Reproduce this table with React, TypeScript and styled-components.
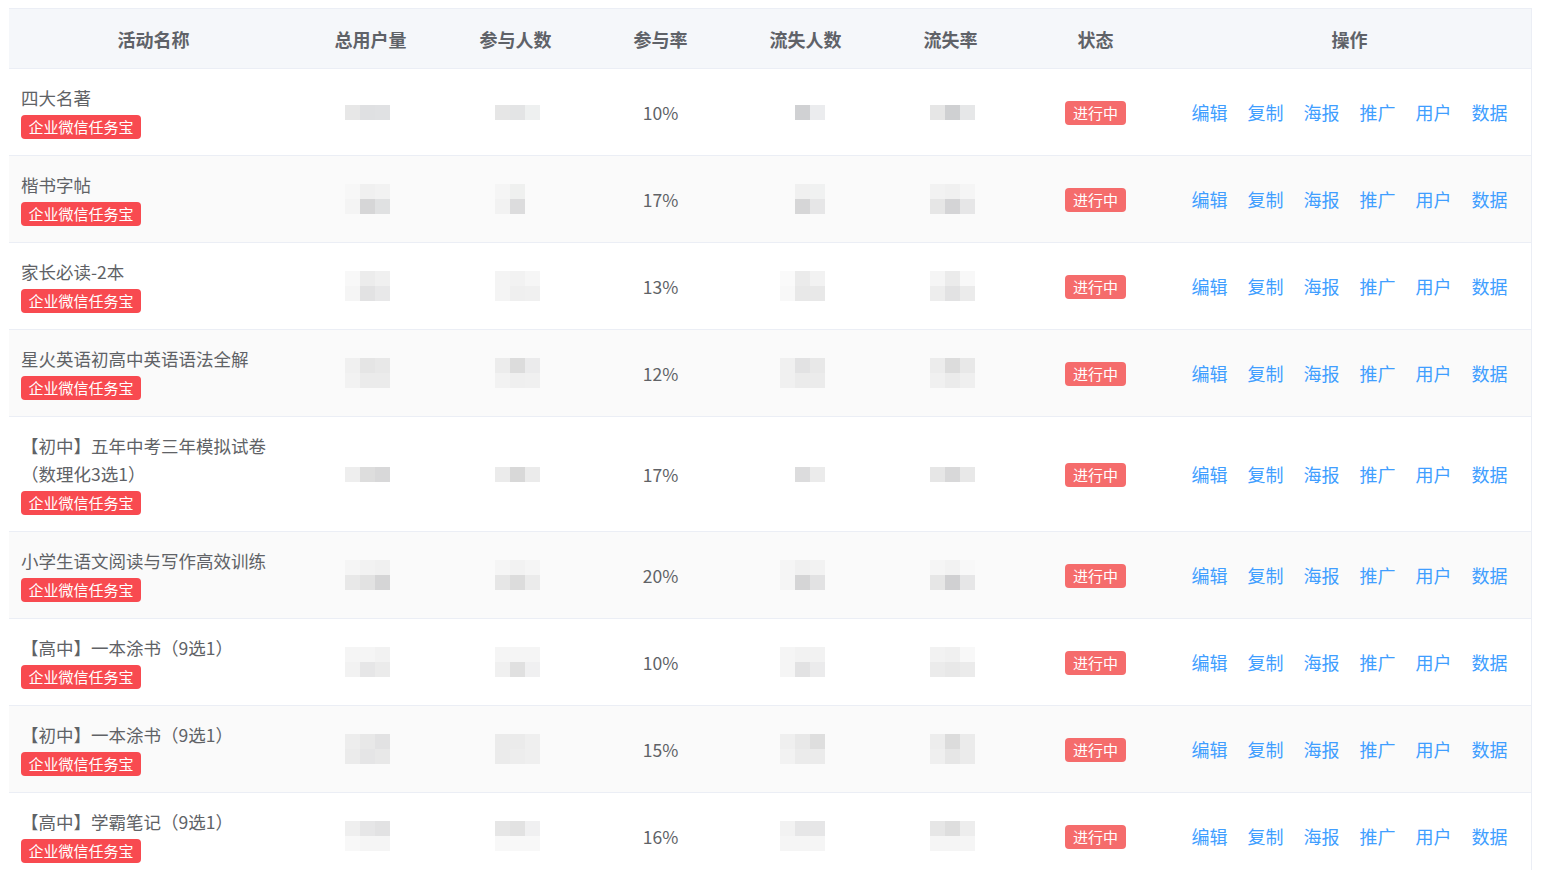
import React from "react";
import styled, { createGlobalStyle } from "styled-components";

const GlobalStyle = createGlobalStyle`
  html, body { margin: 0; padding: 0; background: #ffffff; overflow: hidden; }
  body { font-family: "Noto Sans CJK SC", "Noto Sans", sans-serif; }
`;

const COLS = "289px repeat(6, 145px) 363px";

const Page = styled.div`
  padding: 8px 0 0 9px;
`;

const Table = styled.div`
  width: 1523px;
  border-top: 1px solid #ebeef5;
  border-right: 1px solid #ebeef5;
  box-sizing: border-box;
`;

const HeaderRow = styled.div`
  display: grid;
  grid-template-columns: ${COLS};
  height: 60px;
  background: #f5f7fa;
  border-bottom: 1px solid #ebeef5;
  box-sizing: border-box;
`;

const HeadCell = styled.div`
  display: flex;
  align-items: center;
  justify-content: center;
  font-size: 18px;
  font-weight: 700;
  color: #5f6268;
`;

const Row = styled.div<{ $striped: boolean }>`
  display: grid;
  grid-template-columns: ${COLS};
  background: ${(p) => (p.$striped ? "#fafafa" : "#ffffff")};
  border-bottom: 1px solid #ebeef5;
`;

const NameCell = styled.div`
  padding: 15px 12px 16px 12px;
  display: flex;
  flex-direction: column;
  align-items: flex-start;
`;

const NameText = styled.div`
  font-size: 17.5px;
  line-height: 28px;
  color: #606266;
`;

const Tag = styled.span`
  margin-top: 3px;
  height: 24px;
  padding: 0 7.5px;
  border-radius: 4px;
  background: #f84a50;
  color: #ffffff;
  font-size: 15px;
  line-height: 24px;
  white-space: nowrap;
`;

const Cell = styled.div`
  display: flex;
  align-items: center;
  justify-content: center;
  font-size: 17.5px;
  color: #606266;
`;

const Status = styled.span`
  margin-top: 2px;
  height: 24px;
  padding: 0 7.5px;
  border-radius: 4px;
  background: #f56c6c;
  color: #ffffff;
  font-size: 15px;
  line-height: 24px;
`;

const Actions = styled.div`
  display: flex;
  align-items: center;
  justify-content: center;
  gap: 20px;
`;

const ActionLink = styled.a`
  font-size: 18px;
  color: #409eff;
  text-decoration: none;
  cursor: pointer;
`;

const MosaicGrid = styled.div<{ $dx: number }>`
  display: grid;
  grid-template-columns: repeat(3, 15px);
  grid-auto-rows: 15px;
  transform: translateX(${(p) => p.$dx}px);
`;

const Block = styled.span<{ $c: string | null }>`
  background: ${(p) => p.$c ?? "transparent"};
`;

type M = (string | null)[][];

const Mosaic: React.FC<{ m: M; dx: number }> = ({ m, dx }) => (
  <MosaicGrid $dx={dx}>
    {m.flat().map((c, i) => (
      <Block key={i} $c={c} />
    ))}
  </MosaicGrid>
);

interface RowData {
  name: string;
  rate: string;
  m: [M, M, M, M];
}

const rows: RowData[] = [
  {
    name: "四大名著",
    rate: "10%",
    m: [
      [["#e7e7e7", "#dfe0e2", "#e0e1e3"]],
      [["#e6e6e6", "#e3e4e5", "#eef0f0"]],
      [[null, "#d0d1d3", "#ebecee"]],
      [["#e6e6e6", "#cfd0d2", "#e6e7e8"]],
    ],
  },
  {
    name: "楷书字帖",
    rate: "17%",
    m: [
      [["#f7f7f7", "#f0f0f0", "#f2f2f2"], ["#f4f4f4", "#d6d6d7", "#e0e1e2"]],
      [["#f5f5f5", "#eff0ef", null], ["#f2f2f2", "#dcdcdd", null]],
      [[null, "#f0f0f0", "#f0f1f1"], [null, "#d6d6d7", "#e6e6e7"]],
      [["#f2f2f2", "#f0f0f0", "#f5f5f5"], ["#e6e6e6", "#d4d4d6", "#e6e6e7"]],
    ],
  },
  {
    name: "家长必读-2本",
    rate: "13%",
    m: [
      [["#f8f8f8", "#ececec", "#f0f0f0"], ["#f5f5f5", "#e2e2e3", "#e8e8e9"]],
      [["#f4f4f4", "#f2f2f2", "#f6f6f6"], ["#f4f4f4", "#efefef", "#f0f0f0"]],
      [["#fafafa", "#ebebeb", "#f2f2f2"], ["#f8f8f8", "#e8e8e8", "#e8e8e8"]],
      [["#f5f5f5", "#ebebeb", "#f8f8f8"], ["#ededed", "#e2e2e3", "#ebebeb"]],
    ],
  },
  {
    name: "星火英语初高中英语语法全解",
    rate: "12%",
    m: [
      [["#f0f0f0", "#e5e5e5", "#e8e8e8"], ["#f2f2f2", "#ebebeb", "#ebebeb"]],
      [["#ececec", "#dcdcdc", "#ebebec"], ["#f2f2f2", "#efefef", "#f0f0f0"]],
      [["#f0f0f0", "#e2e2e3", "#e8e8e8"], ["#f0f0f0", "#ebebeb", "#ebebeb"]],
      [["#ececec", "#dcdcdc", "#e8e8e8"], ["#f0f0f0", "#ebebeb", "#efefef"]],
    ],
  },
  {
    name: "【初中】五年中考三年模拟试卷（数理化3选1）",
    rate: "17%",
    m: [
      [["#eeeeee", "#dddddd", "#d8d8d9"]],
      [["#ebebeb", "#d8d8d8", "#ebebeb"]],
      [[null, "#dcdcdd", "#ebebeb"]],
      [["#e6e6e6", "#d8d8d9", "#e8e8e8"]],
    ],
  },
  {
    name: "小学生语文阅读与写作高效训练",
    rate: "20%",
    m: [
      [["#f5f5f5", "#f2f2f2", "#f0f0f0"], ["#e8e8e8", "#e2e2e2", "#d5d5d6"]],
      [["#f5f5f5", "#f2f2f2", "#f5f5f5"], ["#e6e6e6", "#dcdcdc", "#ebebeb"]],
      [["#f5f5f5", "#f0f0f0", "#f2f2f2"], ["#f5f5f5", "#d5d5d6", "#e2e2e3"]],
      [["#f5f5f5", "#f2f2f2", "#f8f8f8"], ["#e6e6e6", "#d0d0d2", "#e6e6e7"]],
    ],
  },
  {
    name: "【高中】一本涂书（9选1）",
    rate: "10%",
    m: [
      [["#f5f5f5", "#f5f5f5", "#f2f2f2"], ["#f2f2f2", "#e6e6e7", "#ebebeb"]],
      [["#f5f5f5", "#f5f5f5", "#f5f5f5"], ["#f0f0f0", "#e0e0e0", "#f0f0f1"]],
      [["#f5f5f5", "#f2f2f2", "#f2f2f2"], ["#f5f5f5", "#e2e2e3", "#ebebec"]],
      [["#f2f2f2", "#f0f0f0", "#f8f8f8"], ["#ebebeb", "#e8e8e8", "#ebebeb"]],
    ],
  },
  {
    name: "【初中】一本涂书（9选1）",
    rate: "15%",
    m: [
      [["#ededed", "#e8e8e8", "#e2e2e3"], ["#ebebeb", "#e5e5e6", "#e8e8e8"]],
      [["#ebebeb", "#ebebeb", "#efefef"], ["#ebebeb", "#ededed", "#efefef"]],
      [["#efefef", "#e8e8e8", "#dedede"], ["#f2f2f2", "#ebebeb", "#ebebeb"]],
      [["#ededed", "#dcdcdc", "#ebebeb"], ["#efefef", "#e6e6e6", "#ebebeb"]],
    ],
  },
  {
    name: "【高中】学霸笔记（9选1）",
    rate: "16%",
    m: [
      [["#efefef", "#e6e6e7", "#e2e2e3"], ["#f8f8f8", "#f5f5f5", "#f5f5f5"]],
      [["#e6e6e6", "#e2e2e2", "#f0f0f1"], ["#f8f8f8", "#f8f8f8", "#f8f8f8"]],
      [["#f2f2f2", "#e6e6e7", "#e6e6e7"], ["#f5f5f5", "#f5f5f5", "#f5f5f5"]],
      [["#e6e6e6", "#dedede", "#ededed"], ["#f5f5f5", "#f5f5f5", "#f5f5f5"]],
    ],
  },
];

const headers = ["活动名称", "总用户量", "参与人数", "参与率", "流失人数", "流失率", "状态", "操作"];
const actions = ["编辑", "复制", "海报", "推广", "用户", "数据"];

export default function App() {
  return (
    <>
      <GlobalStyle />
      <Page>
        <Table>
          <HeaderRow>
            {headers.map((h) => (
              <HeadCell key={h}>{h}</HeadCell>
            ))}
          </HeaderRow>
          {rows.map((r, i) => (
            <Row key={i} $striped={i % 2 === 1}>
              <NameCell>
                <NameText>{r.name}</NameText>
                <Tag>企业微信任务宝</Tag>
              </NameCell>
              <Cell>
                <Mosaic m={r.m[0]} dx={-3} />
              </Cell>
              <Cell>
                <Mosaic m={r.m[1]} dx={2} />
              </Cell>
              <Cell>{r.rate}</Cell>
              <Cell>
                <Mosaic m={r.m[2]} dx={-3} />
              </Cell>
              <Cell>
                <Mosaic m={r.m[3]} dx={2} />
              </Cell>
              <Cell>
                <Status>进行中</Status>
              </Cell>
              <Actions>
                {actions.map((a) => (
                  <ActionLink key={a}>{a}</ActionLink>
                ))}
              </Actions>
            </Row>
          ))}
        </Table>
      </Page>
    </>
  );
}
